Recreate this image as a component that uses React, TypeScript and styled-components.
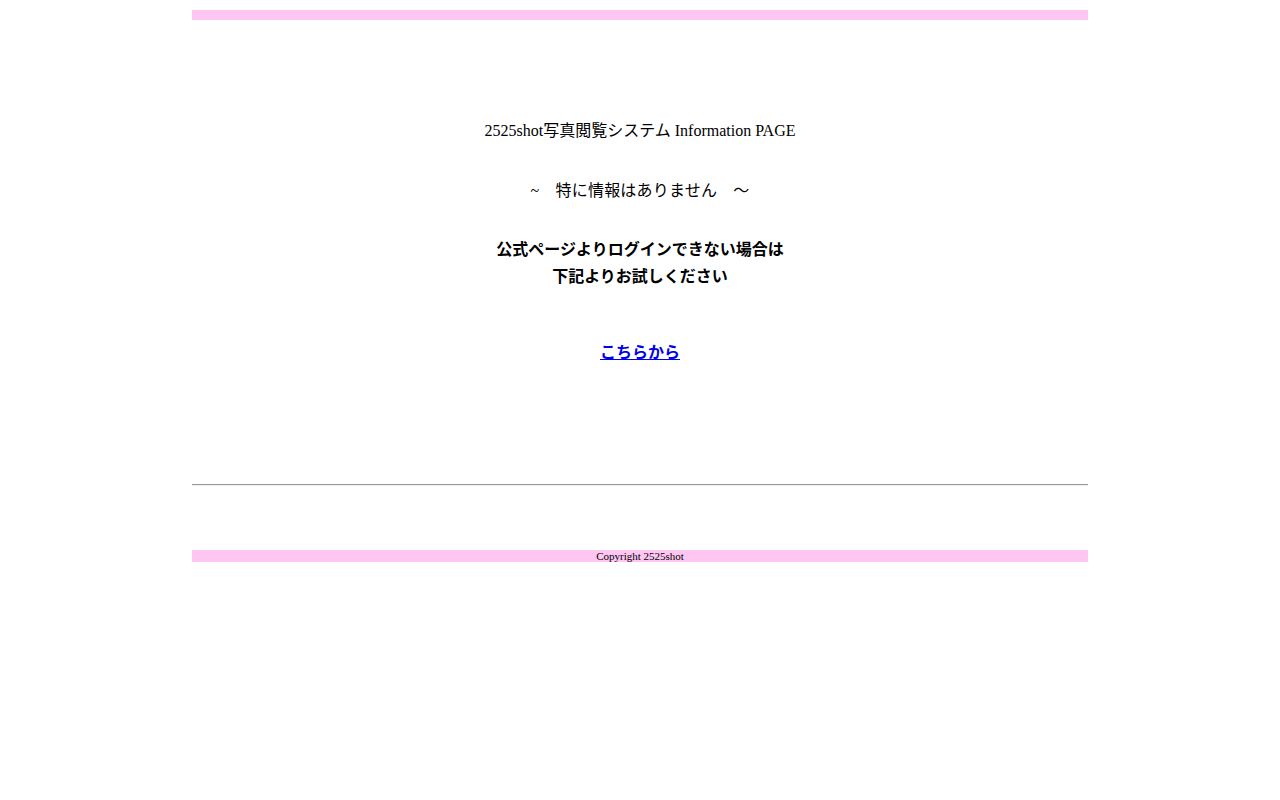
import React from "react";
import styled, { createGlobalStyle } from "styled-components";

const Global = createGlobalStyle`
  html, body { margin: 0; padding: 0; background: #ffffff; }
  body {
    padding: 8px;
    font-family: "Liberation Serif", "Noto Sans CJK JP", serif;
    color: #000000;
  }
`;

const Page = styled.div`
  width: 896px;
  margin: 0 auto;
  padding-top: 2px;
  display: flex;
  flex-direction: column;
`;

const PinkBar = styled.div<{ $h: number }>`
  height: ${(p) => p.$h}px;
  background: #ffc6f4;
  display: flex;
  align-items: center;
  justify-content: center;
`;

const Line = styled.div<{ $top: number; $lh?: number; $bold?: boolean; $ls?: number }>`
  margin-top: ${(p) => p.$top}px;
  text-align: center;
  font-size: 16px;
  line-height: ${(p) => p.$lh ?? 20}px;
  font-weight: ${(p) => (p.$bold ? 700 : 400)};
  letter-spacing: ${(p) => p.$ls ?? 0}px;
`;

const Link = styled.a`
  color: #0000ee;
  text-decoration: underline;
  font-weight: 700;
`;

const Rule = styled.hr`
  margin: 0;
  margin-top: 121px;
  height: 0;
  border: none;
  border-top: 1px solid #9a9a9a;
  border-bottom: 1px solid #eeeeee;
`;

const Copy = styled.span`
  font-size: 11px;
  line-height: 12px;
`;

const Spacer = styled.div`
  height: 64px;
`;

export default function App() {
  return (
    <>
      <Global />
      <Page>
        <PinkBar $h={10} />
        <Line $top={101}>2525shot写真閲覧システム Information PAGE</Line>
        <Line $top={40} $ls={0.2}>~　特に情報はありません　～</Line>
        <Line $top={35} $lh={27} $bold>
          公式ページよりログインできない場合は
          <br />
          下記よりお試しください
        </Line>
        <Line $top={53}>
          <Link href="#">こちらから</Link>
        </Line>
        <Rule />
        <Spacer />
        <PinkBar $h={12}>
          <Copy>Copyright 2525shot</Copy>
        </PinkBar>
      </Page>
    </>
  );
}
